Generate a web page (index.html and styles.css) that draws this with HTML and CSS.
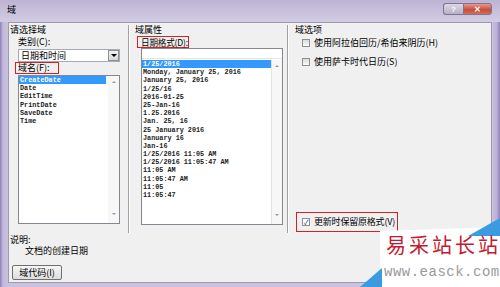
FILE: index.html
```html
<!DOCTYPE html>
<html lang="zh-CN">
<head>
    <meta charset="UTF-8">
    <title>域</title>
    <link rel="stylesheet" href="styles.css">
</head>
<body>
    <div class="window">
        <div class="titlebar">
            <span class="title">域</span>
            <div class="caption-btns">
                <span class="cap-btn help">?</span>
                <span class="cap-btn close">✕</span>
            </div>
        </div>

        <div class="client">
            <div class="main">
                <!-- 请选择域 -->
                <div class="col col-left">
                    <div class="heading">请选择域</div>
                    <div class="sub-label">类别(C):</div>
                    <div class="combo">
                        <span>日期和时间</span>
                        <span class="drop-btn"><i class="tri-down"></i></span>
                    </div>
                    <div class="mark name-label">域名(F):</div>
                    <div class="listbox left-list">
                        <ul class="items">
                            <li class="selected">CreateDate</li>
                            <li>Date</li>
                            <li>EditTime</li>
                            <li>PrintDate</li>
                            <li>SaveDate</li>
                            <li>Time</li>
                        </ul>
                        <div class="scrollbar">
                            <i class="arrow-up"></i>
                            <i class="arrow-down"></i>
                        </div>
                    </div>
                </div>

                <div class="separator"></div>

                <!-- 域属性 -->
                <div class="col col-mid">
                    <div class="heading">域属性</div>
                    <div class="mark format-label">日期格式(D):</div>
                    <div class="format-box">
                        <div class="edit"></div>
                        <div class="listbox mid-list">
                            <ul class="items">
                                <li class="selected">1/25/2016</li>
                                <li>Monday, January 25, 2016</li>
                                <li>January 25, 2016</li>
                                <li>1/25/16</li>
                                <li>2016-01-25</li>
                                <li>25-Jan-16</li>
                                <li>1.25.2016</li>
                                <li>Jan. 25, 16</li>
                                <li>25 January 2016</li>
                                <li>January 16</li>
                                <li>Jan-16</li>
                                <li>1/25/2016 11:05 AM</li>
                                <li>1/25/2016 11:05:47 AM</li>
                                <li>11:05 AM</li>
                                <li>11:05:47 AM</li>
                                <li>11:05</li>
                                <li>11:05:47</li>
                            </ul>
                            <div class="scrollbar">
                                <i class="arrow-up"></i>
                                <i class="arrow-down"></i>
                            </div>
                        </div>
                    </div>
                </div>

                <div class="separator"></div>

                <!-- 域选项 -->
                <div class="col col-right">
                    <div class="heading">域选项</div>
                    <label class="check-row first">
                        <span class="checkbox"></span>
                        <span>使用阿拉伯回历/希伯来阴历(H)</span>
                    </label>
                    <label class="check-row second">
                        <span class="checkbox"></span>
                        <span>使用萨卡时代日历(S)</span>
                    </label>
                    <label class="check-row keep-format">
                        <span class="checkbox checked">✓</span>
                        <span>更新时保留原格式(V)</span>
                    </label>
                </div>
            </div>

            <div class="bottom">
                <div class="desc-title">说明:</div>
                <div class="desc-text">文档的创建日期</div>
                <button class="code-btn">域代码(I)</button>
            </div>
        </div>

        <!-- watermark over the corner -->
        <div class="watermark">
            <svg class="wm-bg" width="140" height="69" viewBox="0 0 140 69">
                <polygon points="20,13 140,9 140,69 20,69" fill="#ffffff"/>
                <polygon points="108,18 140,0 140,18" fill="#3a9be0"/>
                <polygon points="0,69 22,50 22,69" fill="#3a9be0"/>
            </svg>
            <div class="wm-title">易采站长站</div>
            <div class="wm-url">www.easck.com</div>
        </div>
    </div>
</body>
</html>
```

FILE: styles.css
```css
* {
    box-sizing: border-box;
    margin: 0;
    padding: 0;
}

body {
    width: 500px;
    height: 287px;
    overflow: hidden;
    font-family: "Noto Sans CJK SC", "Liberation Sans", sans-serif;
    font-size: 9px;
    color: #000;
}

.window {
    position: relative;
    width: 500px;
    height: 287px;
    display: flex;
    flex-direction: column;
    padding: 0 8px 4px 8px;
    background: linear-gradient(90deg, #8d7fb6 0, #c3badb 3px, #c9c1de 8px, #c9c1de 492px, #b9aed6 497px, #8d7fb6 500px);
}

.titlebar {
    height: 22px;
    display: flex;
    justify-content: space-between;
    align-items: flex-start;
    background: linear-gradient(#bdb4d4, #d2cce3);
    margin: 0 -8px;
    padding: 0 8px;
}

.title {
    margin-top: 5px;
    margin-left: -1px;
    font-size: 9px;
    line-height: 10px;
}

.caption-btns {
    display: flex;
    margin-top: 3px;
}

.cap-btn {
    height: 12px;
    display: flex;
    align-items: center;
    justify-content: center;
    font-family: "Liberation Sans", sans-serif;
    font-weight: bold;
    font-size: 8px;
    border: 1px solid #7d7592;
}

.help {
    width: 20px;
    color: #fff;
    background: linear-gradient(#dcd8e6, #b6b0c6);
    border-radius: 3px 0 0 3px;
    border-right: none;
}

.close {
    width: 29px;
    color: #fff;
    background: linear-gradient(#e59a8c, #c94b39 60%, #d2705e);
    border-radius: 0 3px 3px 0;
}

.client {
    flex: 1;
    display: flex;
    flex-direction: column;
    background: #f0f0f0;
    border: 1px solid #9f98b4;
}

.main {
    height: 212px;
    display: flex;
}

.col {
    display: flex;
    flex-direction: column;
    padding-top: 1px;
    white-space: nowrap;
}

.heading {
    height: 12px;
    line-height: 12px;
}

.col-left {
    width: 119px;
    padding-left: 1px;
}

.sub-label {
    margin-left: 8px;
    height: 12px;
    line-height: 12px;
}

.combo {
    margin: 1px 0 0 8px;
    width: 102px;
    height: 13px;
    display: flex;
    align-items: center;
    justify-content: space-between;
    background: #fff;
    border: 1px solid #a5acb5;
    padding-left: 2px;
    line-height: 11px;
}

.drop-btn {
    width: 11px;
    height: 11px;
    display: flex;
    align-items: center;
    justify-content: center;
    border: 1px solid #8e8f8f;
    background: linear-gradient(#f2f2f2, #d8d8d8);
}

.tri-down {
    border-left: 3px solid transparent;
    border-right: 3px solid transparent;
    border-top: 3px solid #000;
}

.mark {
    border: 1px solid #d61f26;
    height: 12px;
    line-height: 10px;
    padding-left: 2px;
}

.name-label {
    margin-left: 5px;
    width: 44px;
}

.listbox {
    display: flex;
    background: #fff;
    border: 1px solid #828790;
}

.items {
    list-style: none;
    flex: 1;
    font-family: "Liberation Mono", monospace;
    font-size: 6.8px;
    font-weight: bold;
    color: #222;
}

.items li {
    height: 8.2px;
    line-height: 8.2px;
    padding-left: 1px;
    white-space: nowrap;
}

.items li.selected {
    background: #3399ff;
    color: #fff;
}

.scrollbar {
    width: 11px;
    display: flex;
    flex-direction: column;
    justify-content: space-between;
    align-items: center;
    padding: 5px 0 8px;
    background: #f7f7f7;
}

.arrow-up {
    border-left: 2px solid transparent;
    border-right: 2px solid transparent;
    border-bottom: 2px solid #9a9a9a;
}

.arrow-down {
    border-left: 2px solid transparent;
    border-right: 2px solid transparent;
    border-top: 2px solid #9a9a9a;
}

.left-list {
    margin: 1px 0 0 8px;
    width: 102px;
    height: 149px;
}

.left-list .items li.selected {
    margin-right: 2px;
}

.separator {
    width: 2px;
    margin: 2px 0 2px;
    border-left: 1px solid #a0a0a0;
    border-right: 1px solid #fff;
}

.col-mid {
    width: 157px;
    padding-left: 5px;
}

.format-label {
    margin-left: 2px;
    width: 52px;
    padding-left: 3px;
    font-size: 8.6px;
    letter-spacing: -0.2px;
}

.format-box {
    margin-left: 6px;
    width: 142px;
    border: 1px solid #828790;
    background: #fff;
}

.edit {
    height: 10px;
    border-bottom: 1px solid #e6e6e6;
}

.mid-list {
    border: none;
    height: 165px;
    padding-top: 1px;
}

.mid-list .scrollbar {
    border-left: 1px solid #e2e2e2;
}

.col-right {
    flex: 1;
    padding-left: 6px;
}

.check-row {
    display: flex;
    align-items: center;
    height: 12px;
    line-height: 12px;
    padding-left: 7px;
}

.check-row.first {
    margin-top: 1px;
}

.check-row.second {
    margin-top: 7px;
}

.checkbox {
    flex: none;
    width: 8px;
    height: 8px;
    margin-right: 4px;
    border: 1px solid #8e8f8f;
    background: linear-gradient(#dcdcdc, #fbfbfb);
    display: flex;
    align-items: center;
    justify-content: center;
    font-size: 7px;
    line-height: 7px;
    color: #2a3a70;
}

.checked {
    background: #fff;
}

.keep-format {
    margin: auto 0 3px 1px;
    width: 102px;
    height: 20px;
    padding-left: 5px;
    border: 1px solid #d61f26;
    letter-spacing: -0.2px;
}

.bottom {
    display: flex;
    flex-direction: column;
    align-items: flex-start;
    padding-left: 1px;
}

.desc-title {
    height: 10px;
    line-height: 10px;
}

.desc-text {
    margin-left: 15px;
    height: 12px;
    line-height: 12px;
}

.code-btn {
    margin: 8px 0 0 2px;
    width: 50px;
    height: 15px;
    font-family: "Noto Sans CJK SC", "Liberation Sans", sans-serif;
    font-size: 9px;
    line-height: 13px;
    white-space: nowrap;
    border: 1px solid #707070;
    border-radius: 2px;
    background: linear-gradient(#f6f6f6, #dddddd);
    color: #000;
}

.watermark {
    position: absolute;
    right: 0;
    bottom: 0;
    width: 140px;
    height: 69px;
}

.wm-bg {
    position: absolute;
    left: 0;
    top: 0;
}

.wm-title {
    position: absolute;
    left: 26px;
    top: 16px;
    font-size: 20px;
    line-height: 22px;
    letter-spacing: 3px;
    color: #c41a30;
    white-space: nowrap;
}

.wm-url {
    position: absolute;
    left: 24px;
    top: 47px;
    font-family: "Liberation Mono", monospace;
    font-size: 14px;
    line-height: 14px;
    letter-spacing: 0.5px;
    color: #9a9a9a;
    white-space: nowrap;
}
```
